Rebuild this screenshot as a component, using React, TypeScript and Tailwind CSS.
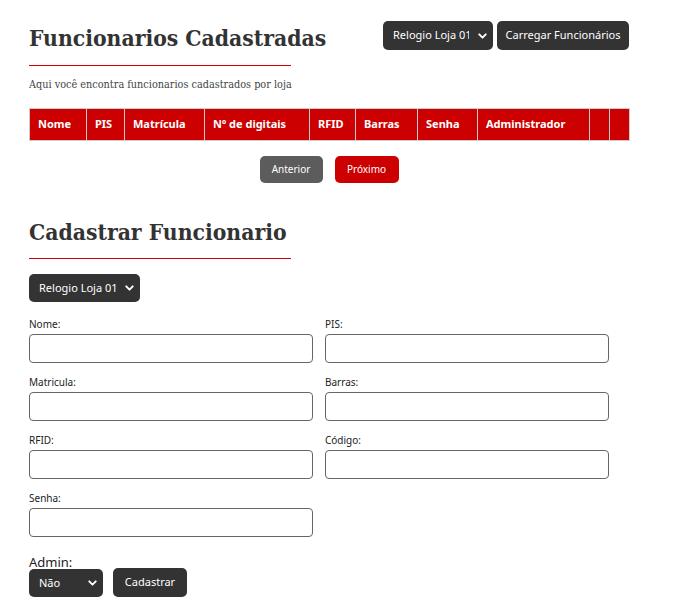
import { ChevronDown } from "lucide-react";

const sans = "font-['Noto_Sans',sans-serif]";
const slab = "font-['DejaVu_Serif_Condensed','DejaVu_Serif',serif]";

const columns = [
	{ label: "Nome", w: "w-[57px]" },
	{ label: "PIS", w: "w-[38px]" },
	{ label: "Matrícula", w: "w-[80px]" },
	{ label: "Nº de digitais", w: "w-[105px]" },
	{ label: "RFID", w: "w-[46px]" },
	{ label: "Barras", w: "w-[62px]" },
	{ label: "Senha", w: "w-[60px]" },
	{ label: "Administrador", w: "w-[112px]" },
	{ label: "", w: "w-[20px]" },
	{ label: "", w: "w-[20px]" },
];

function DarkSelect({ options, className }: { options: string[]; className: string }) {
	return (
		<div className={`relative ${className}`}>
			<select className="h-full w-full appearance-none rounded-[5px] bg-[#333333] pl-[10px] pr-6 text-[11px] text-white outline-none">
				{options.map((o) => (
					<option key={o}>{o}</option>
				))}
			</select>
			<ChevronDown
				size={13}
				strokeWidth={3.5}
				className="pointer-events-none absolute right-[4px] top-1/2 -translate-y-1/2 text-white"
			/>
		</div>
	);
}

function Field({ label }: { label: string }) {
	return (
		<div className="flex flex-col">
			<label className="mb-[3px] text-[10px] leading-[14px] text-[#222]">{label}</label>
			<input className="h-[29px] w-full rounded-[4px] border border-[#666] bg-white" />
		</div>
	);
}

export default function App() {
	return (
		<div className={`${sans} min-h-[612px] bg-white text-[#333]`}>
			<div className="ml-[29px] w-[600px]">
				<div className="flex items-start justify-between pt-[21px]">
					<div>
						<h1 className={`${slab} mt-[2px] text-[22.7px] font-bold leading-[30px] text-[#333]`}>
							Funcionarios Cadastradas
						</h1>
						<div className="mt-[12px] h-px w-[262px] bg-[#cc0000]" />
						<p className={`${slab} mt-[12px] text-[10.8px] leading-[14px] text-[#444]`}>
							Aqui você encontra funcionarios cadastrados por loja
						</p>
					</div>
					<div className="flex gap-[4px]">
						<DarkSelect options={["Relogio Loja 01"]} className="h-[29px] w-[110px]" />
						<button className="h-[29px] w-[132px] rounded-[5px] bg-[#333333] text-[11px] text-white">
							Carregar Funcionários
						</button>
					</div>
				</div>

				<table className="mt-[16px] w-[600px] table-fixed border-collapse">
					<thead>
						<tr className="h-[32px] bg-[#cc0000]">
							{columns.map((c, i) => (
								<th
									key={i}
									className={`${c.w} border border-[#cccccc] pl-[8px] text-left text-[11px] font-bold text-white`}
								>
									{c.label}
								</th>
							))}
						</tr>
					</thead>
				</table>

				<div className="mt-[15px] flex justify-center gap-[12px]">
					<button className="h-[27px] w-[63px] rounded-[5px] bg-[#5c5c5c] text-[10px] text-white">
						Anterior
					</button>
					<button className="h-[27px] w-[64px] rounded-[5px] bg-[#cc0000] text-[10px] text-white">
						Próximo
					</button>
				</div>

				<h2 className={`${slab} mt-[34px] text-[22.7px] font-bold leading-[30px] text-[#333]`}>
					Cadastrar Funcionario
				</h2>
				<div className="mt-[11px] h-px w-[262px] bg-[#cc0000]" />

				<DarkSelect options={["Relogio Loja 01"]} className="mt-[15px] h-[28px] w-[111px]" />

				<div className="mt-[15px] grid w-[580px] grid-cols-2 gap-x-[12px] gap-y-[12px]">
					<Field label="Nome:" />
					<Field label="PIS:" />
					<Field label="Matricula:" />
					<Field label="Barras:" />
					<Field label="RFID:" />
					<Field label="Código:" />
					<Field label="Senha:" />
				</div>

				<div className="mt-[19px] text-[13px] leading-[12px] text-[#222]">Admin:</div>
				<div className="flex items-end gap-[10px]">
					<DarkSelect options={["Não", "Sim"]} className="h-[28px] w-[74px]" />
					<button className="h-[29px] w-[74px] rounded-[5px] bg-[#333333] text-[11px] text-white">
						Cadastrar
					</button>
				</div>
			</div>
		</div>
	);
}
